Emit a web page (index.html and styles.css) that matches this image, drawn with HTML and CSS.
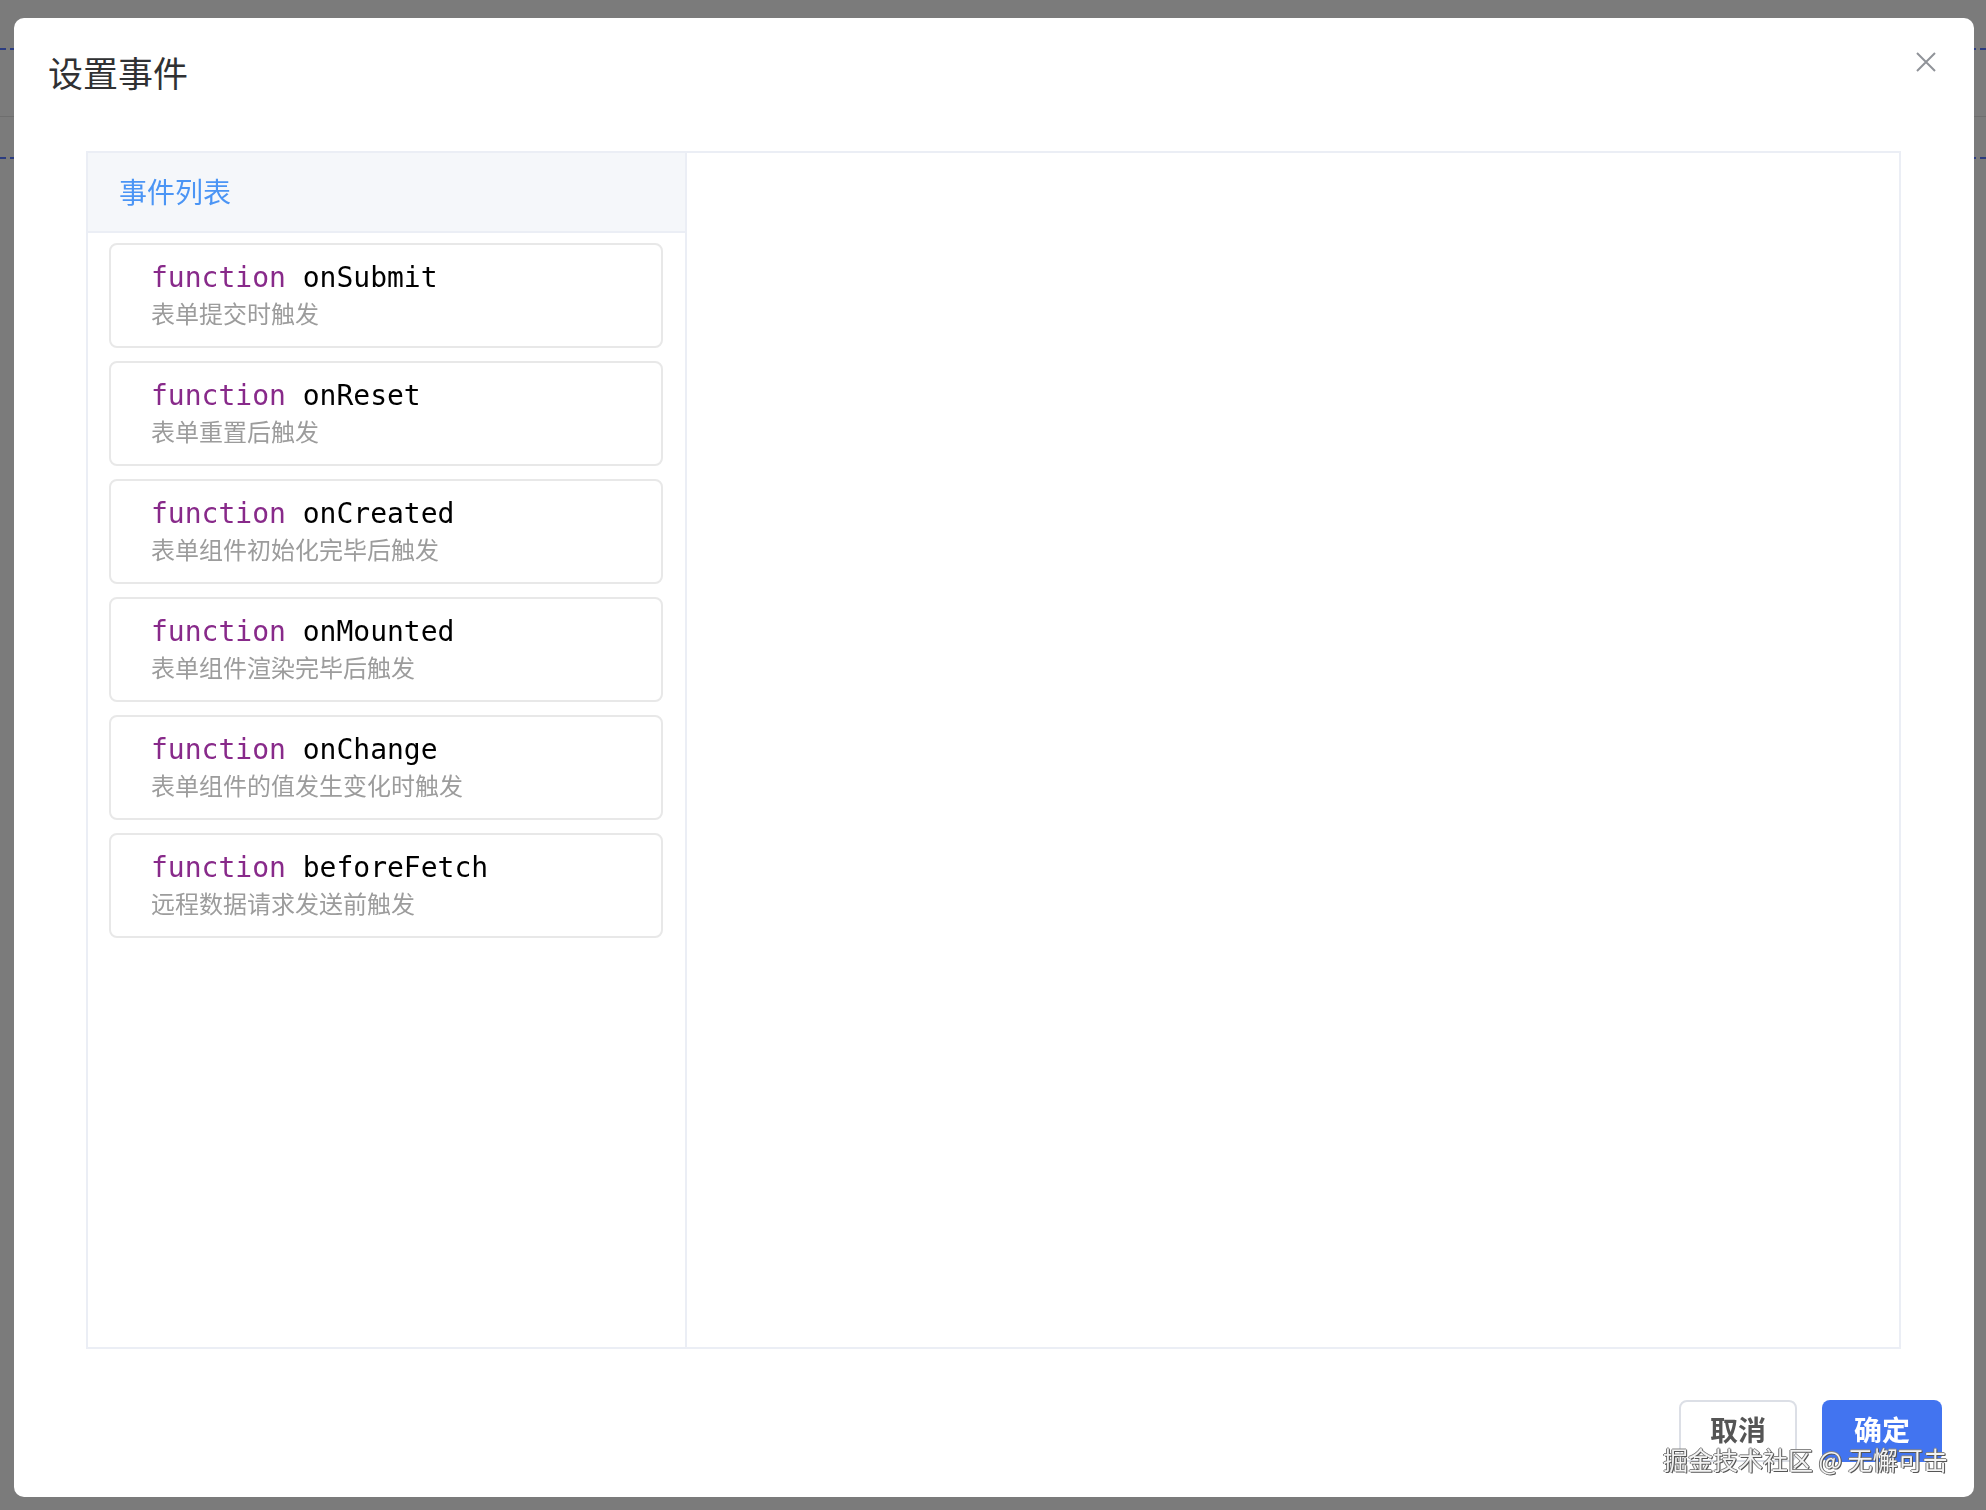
FILE: index.html
```html
<!DOCTYPE html>
<html lang="zh-CN">
<head>
  <meta charset="UTF-8">
  <title>设置事件</title>
  <link rel="stylesheet" href="styles.css">
</head>
<body>
  <div class="page">
    <div class="page-line dashed"></div>
    <div class="page-line solid"></div>
    <div class="page-line dashed"></div>
  </div>

  <div class="dialog">
    <div class="dialog-header">
      <span class="dialog-title">设置事件</span>
      <button class="close-btn" aria-label="关闭">
        <svg width="22" height="22" viewBox="0 0 22 22">
          <path d="M2 2 L20 20 M20 2 L2 20" stroke="#909399" stroke-width="2" fill="none"/>
        </svg>
      </button>
    </div>

    <div class="dialog-body">
      <div class="event-panel">
        <div class="event-list">
          <div class="event-list-title">事件列表</div>
          <div class="event-items">
            <div class="event-item">
              <div class="event-sign"><span class="kw">function</span> onSubmit</div>
              <div class="event-desc">表单提交时触发</div>
            </div>
            <div class="event-item">
              <div class="event-sign"><span class="kw">function</span> onReset</div>
              <div class="event-desc">表单重置后触发</div>
            </div>
            <div class="event-item">
              <div class="event-sign"><span class="kw">function</span> onCreated</div>
              <div class="event-desc">表单组件初始化完毕后触发</div>
            </div>
            <div class="event-item">
              <div class="event-sign"><span class="kw">function</span> onMounted</div>
              <div class="event-desc">表单组件渲染完毕后触发</div>
            </div>
            <div class="event-item">
              <div class="event-sign"><span class="kw">function</span> onChange</div>
              <div class="event-desc">表单组件的值发生变化时触发</div>
            </div>
            <div class="event-item">
              <div class="event-sign"><span class="kw">function</span> beforeFetch</div>
              <div class="event-desc">远程数据请求发送前触发</div>
            </div>
          </div>
        </div>
        <div class="event-editor"></div>
      </div>
    </div>

    <div class="dialog-footer">
      <button class="btn btn-cancel">取消</button>
      <button class="btn btn-primary">确定</button>
    </div>
  </div>

  <div class="watermark">掘金技术社区 @ 无懈可击</div>
</body>
</html>
```

FILE: styles.css
```css
body {
  margin: 0;
  height: 100vh;
  overflow: hidden;
  background-color: #7b7b7b;
  font-family: "Noto Sans CJK SC", "Noto Sans", sans-serif;
}

/* page underneath the mask */
.page {
  padding-top: 48px;
}

.page-line {
  height: 0;
}

.page-line.dashed {
  border-top: 2px dashed #2c3c80;
}

.page-line.solid {
  margin: 66px 0 40px;
  border-top: 1px solid #6e6e6e;
}

.dialog {
  position: fixed;
  left: 14px;
  top: 18px;
  width: 1960px;
  height: 1479px;
  background: #fff;
  border-radius: 10px;
  display: flex;
  flex-direction: column;
  box-sizing: border-box;
}

.dialog-header {
  height: 100px;
  display: flex;
  justify-content: space-between;
  align-items: flex-start;
  padding: 0 37px 0 34px;
}

.dialog-title {
  margin-top: 30px;
  font-size: 35px;
  line-height: 48px;
  color: #303133;
}

.close-btn {
  margin-top: 33px;
  padding: 0;
  border: none;
  background: none;
  width: 22px;
  height: 22px;
  cursor: pointer;
}

.close-btn svg {
  display: block;
}

.dialog-body {
  padding: 33px 73px 0 72px;
}

.event-panel {
  display: flex;
  height: 1198px;
  border: 2px solid #ebeef5;
  box-sizing: border-box;
}

.event-list {
  width: 597px;
  border-right: 2px solid #ebeef5;
}

.event-list-title {
  height: 78px;
  line-height: 76px;
  padding-left: 31px;
  background: #f5f7fa;
  border-bottom: 2px solid #ebeef5;
  color: #4b95f5;
  font-size: 28px;
}

.event-items {
  display: flex;
  flex-direction: column;
  gap: 13px;
  padding: 10px 22px 0 21px;
}

.event-item {
  height: 105px;
  box-sizing: border-box;
  border: 2px solid #e8e8e8;
  border-radius: 8px;
  padding: 15px 0 0 40px;
}

.event-sign {
  font-family: "DejaVu Sans Mono", "Liberation Mono", monospace;
  font-size: 28px;
  line-height: 36px;
  color: #000;
}

.kw {
  color: #882a8a;
}

.event-desc {
  font-size: 24px;
  line-height: 34px;
  color: #9c9c9c;
}

.event-editor {
  flex: 1;
}

.dialog-footer {
  display: flex;
  justify-content: flex-end;
  gap: 25px;
  padding: 51px 32px 0 0;
}

.btn {
  height: 62px;
  padding: 0 0 4px;
  border-radius: 8px;
  font-family: "Noto Sans CJK SC", sans-serif;
  font-size: 28px;
  font-weight: bold;
  cursor: pointer;
}

.btn-cancel {
  width: 118px;
  background: #fff;
  border: 2px solid #dcdfe6;
  color: #555;
}

.btn-primary {
  width: 120px;
  background: #4274f0;
  border: none;
  color: #fff;
}

.watermark {
  position: fixed;
  left: 1663px;
  top: 1441px;
  font-size: 25px;
  line-height: 36px;
  color: #f4f4f4;
  text-shadow: 1px 1px 0 #555, -1px 0 0 #777, 0 -1px 0 #888, 1px 0 0 #666;
  white-space: nowrap;
}
```
